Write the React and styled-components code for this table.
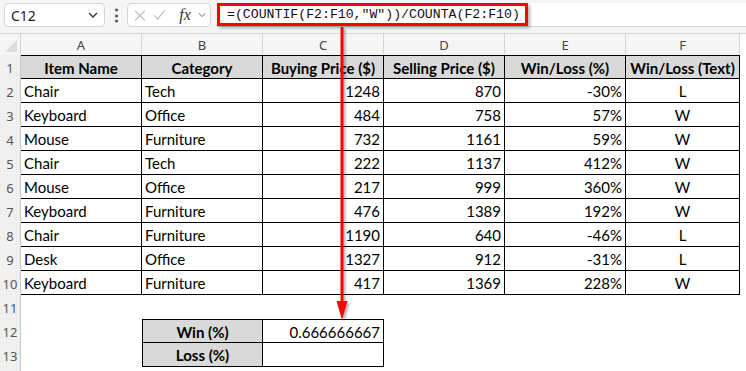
import React from "react";
import styled, { createGlobalStyle } from "styled-components";

const GlobalStyle = createGlobalStyle`
  body {
    margin: 0;
    background: #ffffff;
    font-family: "Lato", "Liberation Sans", sans-serif;
  }
`;

const rows = [
    ["Chair", "Tech", 1248, 870, "-30%", "L"],
    ["Keyboard", "Office", 484, 758, "57%", "W"],
    ["Mouse", "Furniture", 732, 1161, "59%", "W"],
    ["Chair", "Tech", 222, 1137, "412%", "W"],
    ["Mouse", "Office", 217, 999, "360%", "W"],
    ["Keyboard", "Furniture", 476, 1389, "192%", "W"],
    ["Chair", "Furniture", 1190, 640, "-46%", "L"],
    ["Desk", "Office", 1327, 912, "-31%", "L"],
    ["Keyboard", "Furniture", 417, 1369, "228%", "W"],
];

const headers = ["Item Name", "Category", "Buying Price ($)", "Selling Price ($)", "Win/Loss (%)", "Win/Loss (Text)"];
const letters = ["A", "B", "C", "D", "E", "F"];

export default function App() {
    return (
        <Page>
            <GlobalStyle />
            <Toolbar>
                <NameBox>
                    <span>C12</span>
                    <Chevron viewBox="0 0 10 6" width="10" height="6">
                        <path d="M1 1 L5 5 L9 1" />
                    </Chevron>
                </NameBox>
                <Dots>⋮</Dots>
                <FxBox>
                    <svg width="13" height="13" viewBox="0 0 13 13">
                        <path d="M1 1 L12 12 M12 1 L1 12" stroke="#b8b8b8" strokeWidth="1.2" fill="none" />
                    </svg>
                    <svg width="14" height="12" viewBox="0 0 14 12">
                        <path d="M1 6 L5 10.5 L13 1" stroke="#b8b8b8" strokeWidth="1.2" fill="none" />
                    </svg>
                    <Fx>fx</Fx>
                    <Chevron viewBox="0 0 10 6" width="9" height="6" $light>
                        <path d="M1 1 L5 5 L9 1" />
                    </Chevron>
                </FxBox>
                <FormulaInput>
                    <Highlight>=(COUNTIF(F2:F10,"W"))/COUNTA(F2:F10)</Highlight>
                </FormulaInput>
            </Toolbar>

            <Sheet>
                <Corner>
                    <svg width="12" height="12" viewBox="0 0 12 12">
                        <path d="M12 0 L12 12 L0 12 Z" fill="#dcdcdc" />
                    </svg>
                </Corner>
                {letters.map((l) => <ColHead key={l}>{l}</ColHead>)}

                <RowHead>1</RowHead>
                {headers.map((h) => <Cell key={h} $fill $bold $align="center" $top>{h}</Cell>)}

                {rows.map((r, i) => (
                    <React.Fragment key={i}>
                        <RowHead>{i + 2}</RowHead>
                        <Cell $border>{r[0]}</Cell>
                        <Cell $border>{r[1]}</Cell>
                        <Cell $border $align="right">{r[2]}</Cell>
                        <Cell $border $align="right">{r[3]}</Cell>
                        <Cell $border $align="right">{r[4]}</Cell>
                        <Cell $border $align="center">{r[5]}</Cell>
                    </React.Fragment>
                ))}

                <RowHead>11</RowHead>
                {letters.map((l) => <Cell key={l} />)}

                <RowHead>12</RowHead>
                <Cell />
                <Cell $border $fill $bold $align="center" $top $left>Win (%)</Cell>
                <Cell $border $align="right" $top>0.666666667</Cell>
                <Cell />
                <Cell />
                <Cell />

                <RowHead>13</RowHead>
                <Cell />
                <Cell $border $fill $bold $align="center" $left>Loss (%)</Cell>
                <Cell $border />
                <Cell />
                <Cell />
                <Cell />

                <RowHead />
                {letters.map((l) => <Cell key={l} />)}
            </Sheet>

            <Arrow width="16" height="296" viewBox="0 0 16 296">
                <defs>
                    <filter id="sh" x="-50%" y="-5%" width="200%" height="110%">
                        <feDropShadow dx="2" dy="2" stdDeviation="1.2" floodColor="#000" floodOpacity="0.3" />
                    </filter>
                </defs>
                <g filter="url(#sh)">
                    <rect x="6.5" y="0" width="3" height="276" fill="#ff0000" />
                    <path d="M2.5 274 L13.5 274 L8 293 Z" fill="#ff0000" />
                </g>
            </Arrow>
        </Page>
    );
}

const Page = styled.div`
    position: relative;
    width: 746px;
    height: 371px;
    overflow: hidden;
`;

const Toolbar = styled.div`
    height: 33px;
    box-sizing: border-box;
    background: #f5f5f5;
    display: flex;
    align-items: flex-start;
    padding: 3px 0 0 4px;
`;

const NameBox = styled.div`
    width: 101px;
    height: 24px;
    box-sizing: border-box;
    background: #ffffff;
    border: 1px solid #d6d6d6;
    border-radius: 4px;
    display: flex;
    align-items: center;
    justify-content: space-between;
    padding: 0 6px 0 6px;
    font-family: "Noto Sans", "Open Sans", sans-serif;
    font-size: 14px;
    color: #222;
`;

const Chevron = styled.svg`
    fill: none;
    stroke: ${props => props.$light ? "#9a9a9a" : "#333"};
    stroke-width: 1.3;
`;

const Dots = styled.div`
    width: 22px;
    text-align: center;
    font-size: 17px;
    line-height: 24px;
    color: #444;
    font-weight: bold;
`;

const FxBox = styled.div`
    width: 84px;
    height: 24px;
    box-sizing: border-box;
    background: #ffffff;
    border: 1px solid #d6d6d6;
    border-radius: 4px;
    display: flex;
    align-items: center;
    gap: 7px;
    padding: 0 4px 0 6px;
`;

const Fx = styled.span`
    font-family: "Liberation Serif", "DejaVu Serif", serif;
    font-style: italic;
    font-size: 16px;
    color: #333;
    margin-left: 7px;
    line-height: 1;
`;

const FormulaInput = styled.div`
    flex: 1;
    height: 24px;
    margin-left: 6px;
    box-sizing: border-box;
    background: #ffffff;
    border-bottom: 1px solid #d6d6d6;
    display: flex;
    align-items: stretch;
`;

const Highlight = styled.div`
    width: 311px;
    box-sizing: border-box;
    border: 3px solid #ff0000;
    box-shadow: 2px 2px 3px rgba(0, 0, 0, 0.3);
    display: flex;
    align-items: center;
    padding-left: 7px;
    font-family: "Liberation Mono", "DejaVu Sans Mono", monospace;
    font-size: 13.2px;
    color: #111;
    white-space: nowrap;
`;

const Sheet = styled.div`
    display: grid;
    grid-template-columns: 21px 121px 121px 121px 121px 121px 114px;
    grid-template-rows: 21px;
    grid-auto-rows: 24px;
    border-top: 1px solid #d4d4d4;
`;

const Corner = styled.div`
    background: #f5f5f5;
    border-right: 1px solid #d4d4d4;
    display: flex;
    align-items: flex-end;
    justify-content: flex-end;
    padding: 0 3px 3px 0;
`;

const ColHead = styled.div`
    background: #f5f5f5;
    border-right: 1px solid #d4d4d4;
    display: flex;
    align-items: center;
    justify-content: center;
    font-family: "Noto Sans", "Open Sans", sans-serif;
    font-size: 13px;
    color: #444;
`;

const RowHead = styled.div`
    background: #f0f0f0;
    border-right: 1px solid #c8c8c8;
    text-align: center;
    padding-top: 4px;
    box-sizing: border-box;
    font-family: "Noto Sans", "Open Sans", sans-serif;
    font-size: 13px;
    color: #555;
`;

const Cell = styled.div`
    box-sizing: border-box;
    background: ${props => props.$fill ? "#d9d9d9" : "#ffffff"};
    border-right: ${props => props.$border || props.$fill ? "1px solid #000" : "none"};
    border-bottom: ${props => props.$border || props.$fill ? "1px solid #000" : "none"};
    border-top: ${props => props.$top ? "1px solid #000" : "none"};
    border-left: ${props => props.$left ? "1px solid #000" : "none"};
    display: flex;
    align-items: center;
    justify-content: ${props => props.$align === "right" ? "flex-end" : props.$align === "center" ? "center" : "flex-start"};
    padding: 1px 3px 0 3px;
    font-family: "Lato", "Liberation Sans", sans-serif;
    font-size: 15px;
    font-weight: ${props => props.$bold ? 700 : 400};
    color: #000;
    white-space: nowrap;
    overflow: hidden;
`;

const Arrow = styled.svg`
    position: absolute;
    left: 334px;
    top: 27px;
    overflow: visible;
`;
